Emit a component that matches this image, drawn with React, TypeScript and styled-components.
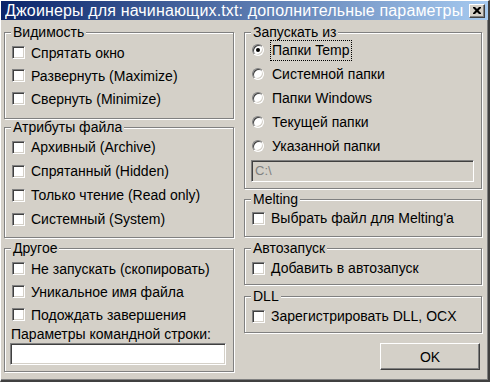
import React from 'react';
import styled, { createGlobalStyle } from 'styled-components';

const GlobalStyle = createGlobalStyle`
  html, body {
    margin: 0;
    padding: 0;
    background: #d4d0c8;
  }
  body {
    font-family: "Liberation Sans", Arial, sans-serif;
  }
`

const Window = styled.div`
  box-sizing: border-box;
  width: 490px;
  height: 382px;
  display: flex;
  flex-direction: column;
  background: #d4d0c8;
  border-style: solid;
  border-width: 1px 2px 2px 1px;
  border-color: #fff #404040 #404040 #fff;
  box-shadow: inset -1px -1px 0 #808080;
  font-size: 14px;
  color: #000;
`

const TitleBar = styled.div`
  height: 19px;
  flex: none;
  display: flex;
  align-items: center;
  gap: 4px;
  padding: 0 3px 0 4px;
  background: linear-gradient(to right, #0a246a, #a6caf0);
  color: #fff;
`

const TitleText = styled.span`
  flex: 1;
  min-width: 0;
  overflow: hidden;
  font-size: 16px;
  letter-spacing: 0.15px;
  white-space: nowrap;
`

const CloseButton = styled.div`
  flex: none;
  width: 16px;
  height: 14px;
  box-sizing: border-box;
  display: flex;
  align-items: center;
  justify-content: center;
  background: #d4d0c8;
  border: 1px solid;
  border-color: #fff #404040 #404040 #fff;
  box-shadow: inset -1px -1px 0 #808080;
`

const Body = styled.div`
  flex: 1;
  display: flex;
  gap: 10px;
  padding: 5px 6px 0 3px;
`

const Column = styled.div<{ $width: number }>`
  width: ${p => p.$width}px;
  display: flex;
  flex-direction: column;
`

const Group = styled.section<{ $gap?: number }>`
  display: flex;
  flex-direction: column;
  margin-top: ${p => p.$gap ?? 0}px;
`

const Caption = styled.div`
  align-self: flex-start;
  position: relative;
  z-index: 1;
  height: 14px;
  line-height: 14px;
  margin: 0 0 -7px 7px;
  padding: 0 2px;
  background: #d4d0c8;
`

const Frame = styled.div<{ $pt: number; $pb: number }>`
  border: 1px solid #808080;
  box-shadow: inset 1px 1px 0 #fff, 1px 1px 0 #fff;
  padding: ${p => p.$pt}px 7px ${p => p.$pb}px 6px;
`

const Row = styled.label<{ $h?: number; $gap?: number }>`
  height: ${p => p.$h ?? 24}px;
  display: flex;
  align-items: center;
  gap: ${p => p.$gap ?? 6}px;
  padding-left: 1px;
  white-space: nowrap;
`

const Check = styled.span`
  flex: none;
  width: 13px;
  height: 13px;
  box-sizing: border-box;
  background: #fff;
  border: 1px solid;
  border-color: #808080 #fff #fff #808080;
  box-shadow: inset 1px 1px 0 #404040, inset -1px -1px 0 #d4d0c8;
`

const Radio = styled.span`
  flex: none;
  width: 12px;
  height: 12px;
  box-sizing: border-box;
  border-radius: 50%;
  display: flex;
  align-items: center;
  justify-content: center;
  background: #fff;
  border: 1px solid;
  border-color: #808080 #fff #fff #808080;
  box-shadow: inset 1px 1px 0 #404040, inset -1px -1px 0 #d4d0c8;
`

const Dot = styled.span`
  width: 4px;
  height: 4px;
  border-radius: 50%;
  background: #000;
`

const Focus = styled.span`
  border: 1px dotted #000;
  padding: 1px 1px 2px;
  margin-left: -2px;
`

const FieldLabel = styled.div`
  height: 17px;
  line-height: 17px;
  white-space: nowrap;
`

const TextBox = styled.div<{ $disabled?: boolean }>`
  height: 22px;
  box-sizing: border-box;
  margin-left: ${p => (p.$disabled ? 0 : -1)}px;
  padding: 0 3px;
  line-height: 20px;
  font-size: 13px;
  color: #808080;
  background: ${p => (p.$disabled ? '#d4d0c8' : '#fff')};
  border: 1px solid;
  border-color: #808080 #fff #fff #808080;
  box-shadow: inset 1px 1px 0 #404040, inset -1px -1px 0 #d4d0c8;
`

const Button = styled.button`
  align-self: flex-end;
  width: 100px;
  height: 27px;
  margin: 10px 2px 0 0;
  padding: 0;
  font: 14px "Liberation Sans", Arial, sans-serif;
  color: #000;
  background: #d4d0c8;
  border: 1px solid;
  border-color: #fff #404040 #404040 #fff;
  box-shadow: inset -1px -1px 0 #808080;
`

const CheckRow = ({ label, h }: { label: string; h?: number }) => (
  <Row $h={h}>
    <Check />
    {label}
  </Row>
)

const RadioRow = ({ label, on }: { label: string; on?: boolean }) => (
  <Row $gap={8}>
    <Radio>{on && <Dot />}</Radio>
    {on ? <Focus>{label}</Focus> : label}
  </Row>
)

const App = () => (
  <Window>
    <GlobalStyle />
    <TitleBar>
      <TitleText>Джоинеры для начинающих.txt: дополнительные параметры</TitleText>
      <CloseButton>
        <svg width="8" height="7" viewBox="0 0 8 7">
          <path d="M0 0h2l2 2 2-2h2v1L5.5 3.5 8 6v1H6L4 5 2 7H0V6l2.5-2.5L0 1z" fill="#000" />
        </svg>
      </CloseButton>
    </TitleBar>
    <Body>
      <Column $width={230}>
        <Group>
          <Caption>Видимость</Caption>
          <Frame $pt={8} $pb={8}>
            <CheckRow h={23} label="Спрятать окно" />
            <CheckRow h={23} label="Развернуть (Maximize)" />
            <CheckRow h={23} label="Свернуть (Minimize)" />
          </Frame>
        </Group>
        <Group $gap={1}>
          <Caption>Атрибуты файла</Caption>
          <Frame $pt={7} $pb={6}>
            <CheckRow label="Архивный (Archive)" />
            <CheckRow label="Спрятанный (Hidden)" />
            <CheckRow label="Только чтение (Read only)" />
            <CheckRow label="Системный (System)" />
          </Frame>
        </Group>
        <Group $gap={3}>
          <Caption>Другое</Caption>
          <Frame $pt={8} $pb={6}>
            <CheckRow h={23} label="Не запускать (скопировать)" />
            <CheckRow h={23} label="Уникальное имя файла" />
            <CheckRow h={23} label="Подождать завершения" />
            <FieldLabel>Параметры командной строки:</FieldLabel>
            <TextBox />
          </Frame>
        </Group>
      </Column>
      <Column $width={238}>
        <Group>
          <Caption>Запускать из</Caption>
          <Frame $pt={5} $pb={6}>
            <RadioRow on label="Папки Temp" />
            <RadioRow label="Системной папки" />
            <RadioRow label="Папки Windows" />
            <RadioRow label="Текущей папки" />
            <RadioRow label="Указанной папки" />
            <TextBox $disabled style={{ marginTop: 2 }}>C:\</TextBox>
          </Frame>
        </Group>
        <Group $gap={3}>
          <Caption>Melting</Caption>
          <Frame $pt={6} $pb={6}>
            <CheckRow label="Выбрать файл для Melting'a" />
          </Frame>
        </Group>
        <Group $gap={4}>
          <Caption>Автозапуск</Caption>
          <Frame $pt={7} $pb={4}>
            <CheckRow label="Добавить в автозапуск" />
          </Frame>
        </Group>
        <Group $gap={4}>
          <Caption>DLL</Caption>
          <Frame $pt={7} $pb={4}>
            <CheckRow label="Зарегистрировать DLL, OCX" />
          </Frame>
        </Group>
        <Button>OK</Button>
      </Column>
    </Body>
  </Window>
);

export default App;
